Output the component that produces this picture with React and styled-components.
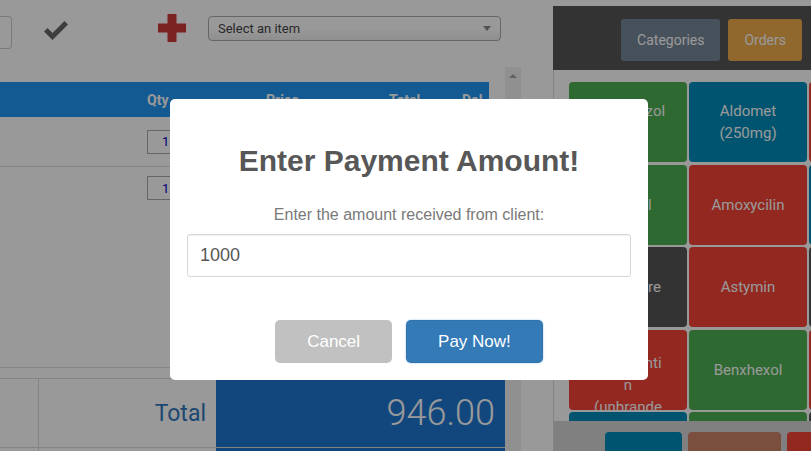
import React from "react";
import styled, { createGlobalStyle } from "styled-components";

const GlobalStyle = createGlobalStyle`
  html, body {
    margin: 0;
    padding: 0;
    background: #fff;
  }
  body {
    font-family: Roboto, "Liberation Sans", sans-serif;
    overflow: hidden;
  }
  * {
    box-sizing: border-box;
  }
`;

const colors = {
  green: "#4caf50",
  blue: "#008cba",
  red: "#f44336",
  dark: "#555",
  brown: "#cd8466",
};

const Screen = styled.div`
  display: flex;
  width: 811px;
  height: 451px;
  overflow: hidden;
`;

const LeftColumn = styled.div`
  width: 553px;
  flex: none;
  display: flex;
  flex-direction: column;
`;

const Toolbar = styled.div`
  height: 67px;
  flex: none;
  display: flex;
  align-items: flex-start;
`;

const StubInput = styled.div`
  width: 12px;
  height: 33px;
  margin-top: 16px;
  border: 1px solid #ccc;
  border-left: none;
  border-radius: 0 4px 4px 0;
`;

const ToolIcon = styled.span`
  display: flex;
  margin-top: ${(p) => p.$top}px;
  margin-left: ${(p) => p.$left}px;
`;

const Select = styled.div`
  margin-top: 16px;
  margin-left: 22px;
  width: 293px;
  height: 25px;
  border: 1px solid #aaa;
  border-radius: 4px;
  background: linear-gradient(to bottom, #fff 50%, #eee 100%);
  display: flex;
  align-items: center;
  justify-content: space-between;
  padding: 0 9px 0 9px;
  font-size: 13px;
  color: #444;
`;

const Caret = styled.span`
  width: 0;
  height: 0;
  border-style: solid;
  border-width: 5px 4px 0 4px;
  border-color: #888 transparent transparent transparent;
`;

const Body = styled.div`
  display: flex;
  flex: 1;
  min-height: 0;
`;

const ScrollArea = styled.div`
  width: 505px;
  flex: none;
  padding-top: 15px;
`;

const ScrollTrack = styled.div`
  width: 16px;
  flex: none;
  background: #f1f1f1;
  display: flex;
  justify-content: center;
  padding-top: 7px;
`;

const UpArrow = styled.span`
  width: 0;
  height: 0;
  border-style: solid;
  border-width: 0 4px 4px 4px;
  border-color: transparent transparent #a3a3a3 transparent;
`;

const ItemsBox = styled.div`
  height: 286px;
  border-bottom: 1px solid #ddd;
`;

const columns = "147px 119px 123px 73px 27px";

const TableHead = styled.div`
  width: 489px;
  height: 35px;
  background: #2196f3;
  display: grid;
  grid-template-columns: ${columns};
  align-items: center;
  color: #fff;
  font-weight: 700;
  font-size: 14px;
`;

const ItemRow = styled.div`
  width: 489px;
  height: ${(p) => p.$height}px;
  display: grid;
  grid-template-columns: ${columns};
  align-items: center;
  border-bottom: ${(p) => (p.$last ? "none" : "1px solid #ddd")};
`;

const QtyInput = styled.div`
  width: 44px;
  height: 24px;
  border: 1px solid #aaa;
  color: #00c;
  font-size: 13px;
  display: flex;
  align-items: center;
  padding-left: 14px;
`;

const Totals = styled.div`
  margin-top: 10px;
  display: grid;
  grid-template-columns: 39px 177px 289px;
  grid-template-rows: 69px 40px;
  border-top: 1px solid #ddd;
`;

const TotalCell = styled.div`
  border-bottom: 1px solid #ddd;
  border-right: ${(p) => (p.$divider ? "1px solid #ddd" : "none")};
  background: ${(p) => (p.$blue ? "#1f77d2" : "transparent")};
  display: flex;
  align-items: center;
  justify-content: flex-end;
  padding-right: 10px;
`;

const TotalLabel = styled.span`
  font-size: 23px;
  color: #3078bd;
`;

const TotalValue = styled.span`
  font-size: 36px;
  font-weight: 300;
  color: #fff;
`;

const RightPanel = styled.aside`
  width: 258px;
  flex: none;
  margin-top: 6px;
  display: flex;
  flex-direction: column;
`;

const PanelHeader = styled.div`
  height: 64px;
  flex: none;
  background: #555;
  display: flex;
  justify-content: flex-end;
  align-items: flex-start;
  gap: 8px;
  padding: 13px 9px 0 0;
`;

const HeaderButton = styled.div`
  height: 42px;
  padding: 0 16px;
  border-radius: 3px;
  background: ${(p) => p.$bg};
  color: #fff;
  font-size: 14px;
  display: flex;
  align-items: center;
`;

const PanelBody = styled.div`
  flex: 1;
  min-height: 0;
  overflow: hidden;
  border-left: 1px solid #ddd;
  padding: 12px 0 0 15px;
`;

const TileGrid = styled.div`
  display: grid;
  grid-template-columns: repeat(3, 118px);
  grid-auto-rows: 80px;
  column-gap: 2px;
  row-gap: 2.5px;
`;

const Tile = styled.div`
  background: ${(p) => p.$bg};
  border-radius: 4px;
  color: #fff;
  font-size: 15px;
  line-height: 22px;
  text-align: center;
  display: flex;
  justify-content: center;
  align-items: safe center;
  padding: 0 21.5px;
  overflow: hidden;
  overflow-wrap: anywhere;
`;

const CategoryStrip = styled.div`
  height: 30px;
  flex: none;
  background: #d5d5d5;
  border-left: 1px solid #ddd;
  display: flex;
  gap: 6px;
  padding: 11px 0 0 51px;
  overflow: hidden;
`;

const CategoryTab = styled.div`
  width: ${(p) => p.$w}px;
  flex: none;
  height: 40px;
  border-radius: 4px;
  background: ${(p) => p.$bg};
`;

const Overlay = styled.div`
  position: fixed;
  inset: 0;
  background: rgba(0, 0, 0, 0.4);
`;

const Modal = styled.div`
  position: absolute;
  top: 99px;
  left: 170px;
  width: 478px;
  padding: 17px;
  background: #fff;
  border-radius: 5px;
  text-align: center;
  font-family: "Liberation Sans", Arial, sans-serif;
`;

const Title = styled.h2`
  margin: 25px 0;
  padding: 0;
  font-size: 30px;
  line-height: 40px;
  font-weight: 700;
  color: #575757;
`;

const Message = styled.p`
  margin: 0;
  font-size: 16px;
  color: #797979;
`;

const AmountInput = styled.input`
  display: block;
  width: 100%;
  height: 43px;
  margin: 10px 0 0;
  padding: 0 12px;
  border: 1px solid #d7d7d7;
  border-radius: 3px;
  box-shadow: inset 0 1px 1px rgba(0, 0, 0, 0.06);
  font-family: inherit;
  font-size: 18px;
  color: #575757;
  outline: none;
`;

const ButtonRow = styled.div`
  display: flex;
  justify-content: center;
  gap: 14px;
  padding-top: 43px;
`;

const ModalButton = styled.button`
  height: 43px;
  padding: 0 32px;
  border: none;
  border-radius: 5px;
  font-family: inherit;
  font-size: 17px;
  color: #fff;
  background: ${(p) => (p.$primary ? "#337ab7" : "#c1c1c1")};
  box-shadow: ${(p) =>
    p.$primary
      ? "0 0 2px rgba(128, 179, 235, 0.8), inset 0 0 0 1px rgba(0, 0, 0, 0.05)"
      : "none"};
`;

const CheckIcon = () => (
  <svg width="24" height="20" viewBox="0 0 24 20">
    <polygon points="0,11.5 3.5,8 8.5,13 20.5,1 24,4.5 8.5,20" fill="#666" />
  </svg>
);

const PlusIcon = () => (
  <svg width="28" height="28" viewBox="0 0 28 28">
    <rect x="9.5" y="0" width="9" height="28" fill="#cb3a3a" />
    <rect x="0" y="9.5" width="28" height="9" fill="#cb3a3a" />
  </svg>
);

const tiles = [
  ["Albendazol Tab", "green"],
  ["Aldomet (250mg)", "blue"],
  ["Alugel", "red"],
  ["Amaryl", "green"],
  ["Amoxycilin", "red"],
  ["Ampiclox", "blue"],
  ["Arthocare", "dark"],
  ["Astymin", "red"],
  ["Atenolol", "dark"],
  ["ACT Lumefantin (unbranded)", "red"],
  ["Benxhexol", "green"],
  ["Bisacodyl", "red"],
  ["Bonjela", "blue"],
  ["Buscopan", "green"],
  ["Calamine", "dark"],
];

const categories = [
  [77, "blue"],
  [93, "brown"],
  [60, "red"],
];

export default function App() {
  return (
    <>
      <GlobalStyle />
      <Screen>
        <LeftColumn>
          <Toolbar>
            <StubInput />
            <ToolIcon $top={20} $left={32}>
              <CheckIcon />
            </ToolIcon>
            <ToolIcon $top={14} $left={90}>
              <PlusIcon />
            </ToolIcon>
            <Select>
              <span>Select an item</span>
              <Caret />
            </Select>
          </Toolbar>
          <Body>
            <ScrollArea>
              <ItemsBox>
                <TableHead>
                  <span />
                  <span>Qty</span>
                  <span>Price</span>
                  <span>Total</span>
                  <span>Del</span>
                </TableHead>
                <ItemRow $height={50}>
                  <span />
                  <QtyInput>1</QtyInput>
                </ItemRow>
                <ItemRow $height={42} $last>
                  <span />
                  <QtyInput>1</QtyInput>
                </ItemRow>
              </ItemsBox>
              <Totals>
                <TotalCell $divider />
                <TotalCell>
                  <TotalLabel>Total</TotalLabel>
                </TotalCell>
                <TotalCell $blue>
                  <TotalValue>946.00</TotalValue>
                </TotalCell>
                <TotalCell $divider />
                <TotalCell />
                <TotalCell $blue />
              </Totals>
            </ScrollArea>
            <ScrollTrack>
              <UpArrow />
            </ScrollTrack>
          </Body>
        </LeftColumn>
        <RightPanel>
          <PanelHeader>
            <HeaderButton $bg="#778899">Categories</HeaderButton>
            <HeaderButton $bg="#f0ad4e">Orders</HeaderButton>
          </PanelHeader>
          <PanelBody>
            <TileGrid>
              {tiles.map(([name, c]) => (
                <Tile key={name} $bg={colors[c]}>
                  {name}
                </Tile>
              ))}
            </TileGrid>
          </PanelBody>
          <CategoryStrip>
            {categories.map(([w, c]) => (
              <CategoryTab key={c} $w={w} $bg={colors[c]} />
            ))}
          </CategoryStrip>
        </RightPanel>
      </Screen>
      <Overlay>
        <Modal>
          <Title>Enter Payment Amount!</Title>
          <Message>Enter the amount received from client:</Message>
          <AmountInput defaultValue="1000" />
          <ButtonRow>
            <ModalButton>Cancel</ModalButton>
            <ModalButton $primary>Pay Now!</ModalButton>
          </ButtonRow>
        </Modal>
      </Overlay>
    </>
  );
}
